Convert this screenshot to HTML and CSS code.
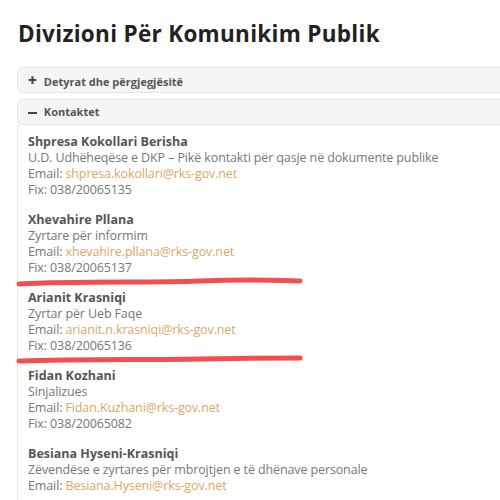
FILE: index.html
```html
<!DOCTYPE html>
<html lang="sq">
<head>
    <meta charset="UTF-8">
    <meta name="viewport" content="width=device-width, initial-scale=1.0">
    <title>Divizioni Për Komunikim Publik</title>
    <link rel="stylesheet" href="styles.css">
</head>
<body>
    <h1 class="title">Divizioni Për Komunikim Publik</h1>

    <div class="accordion">
        <div class="acc-item">
            <div class="acc-head"><span class="acc-sign">+</span> Detyrat dhe përgjegjësitë</div>
        </div>
        <div class="acc-item open">
            <div class="acc-head"><span class="acc-sign minus"></span> Kontaktet</div>
            <div class="acc-body">
                <p class="contact">
                    <b>Shpresa Kokollari Berisha</b><br>
                    U.D. Udhëheqëse e DKP – Pikë kontakti për qasje në dokumente publike<br>
                    Email: <a href="#">shpresa.kokollari@rks-gov.net</a><br>
                    Fix: 038/20065135
                </p>
                <p class="contact">
                    <b>Xhevahire Pllana</b><br>
                    Zyrtare për informim<br>
                    Email: <a href="#">xhevahire.pllana@rks-gov.net</a><br>
                    Fix: 038/20065137
                </p>
                <p class="contact">
                    <b>Arianit Krasniqi</b><br>
                    Zyrtar për Ueb Faqe<br>
                    Email: <a href="#">arianit.n.krasniqi@rks-gov.net</a><br>
                    Fix: 038/20065136
                </p>
                <p class="contact">
                    <b>Fidan Kozhani</b><br>
                    Sinjalizues<br>
                    Email: <a href="#">Fidan.Kuzhani@rks-gov.net</a><br>
                    Fix: 038/20065082
                </p>
                <p class="contact">
                    <b>Besiana Hyseni-Krasniqi</b><br>
                    Zëvendëse e zyrtares për mbrojtjen e të dhënave personale<br>
                    Email: <a href="#">Besiana.Hyseni@rks-gov.net</a>
                </p>
            </div>
        </div>
    </div>

    <!-- marker strokes drawn over the page -->
    <svg class="marks" width="500" height="500" viewBox="0 0 500 500">
        <path d="M19 284 C80 281 150 283 200 281 S270 280 300 281" />
        <path d="M19 361 C80 359 150 360 200 359 S270 358 300 358" />
    </svg>
</body>
</html>
```

FILE: styles.css
```css
html {
    overflow: hidden;
}
body {
    margin: 0;
    padding: 0 0 0 18px;
    height: 500px;
    font-family: "Open Sans", Arial, sans-serif;
    background-color: #fff;
    overflow: hidden;
    position: relative;
}
.title {
    margin: 0;
    padding-top: 19px;
    font-size: 22.5px;
    line-height: 30px;
    font-weight: 700;
    color: #222;
    letter-spacing: 0.3px;
}
.accordion {
    margin: 18px 0 0 -1px;
}
.acc-item {
    margin-bottom: 6px;
}
.acc-head {
    height: 24px;
    line-height: 24px;
    padding-left: 10px;
    background-color: #f5f5f5;
    border: 1px solid #e6e6e6;
    border-right: none;
    border-radius: 6px 0 0 6px;
    font-size: 11px;
    font-weight: 700;
    color: #555;
}
.acc-sign {
    display: inline-block;
    width: 10px;
    margin-right: 3px;
    font-size: 15px;
    font-weight: 800;
    color: #444;
}
.acc-sign.minus {
    height: 2px;
    width: 9px;
    margin-right: 4px;
    background-color: #444;
    vertical-align: middle;
}
.acc-body {
    border-left: 1px solid #e6e6e6;
    padding: 9px 0 0 10px;
    height: 380px;
}
.contact {
    margin: 0 0 14px 0;
    font-size: 12.5px;
    line-height: 16px;
    letter-spacing: -0.12px;
    color: #777;
}
.contact b {
    color: #555;
    letter-spacing: 0;
}
.contact a {
    color: #d9a865;
    text-decoration: none;
}
.marks {
    position: absolute;
    left: 0;
    top: 0;
    pointer-events: none;
}
.marks path {
    fill: none;
    stroke: #f23c3c;
    stroke-width: 5;
    stroke-linecap: round;
    opacity: 0.9;
}
```
